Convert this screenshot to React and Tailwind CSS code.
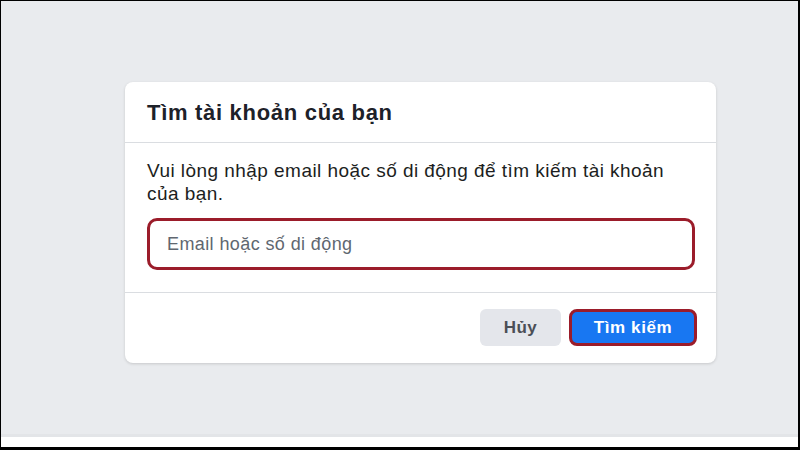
import React from 'react';

const App = () => {
  return (
    <div className="w-[800px] h-[450px] border-l border-t border-r-2 border-b-[3px] border-black bg-[#e9ebee] flex flex-col font-['Liberation_Sans',Arial,sans-serif] overflow-hidden">
      <div className="flex-1 pt-[81px] pl-[124px]">
        <div className="w-[591px] bg-white rounded-lg shadow-[0_1px_3px_rgba(0,0,0,0.15)]">
          <div className="h-[61px] flex items-center px-[22px] border-b border-[#dadde1]">
            <h2 className="text-[22px] tracking-[0.7px] font-bold text-[#1d2129]">Tìm tài khoản của bạn</h2>
          </div>
          <div className="pt-[16px] pb-[22px] px-[22px] border-b border-[#dadde1]">
            <p className="text-[19px] tracking-[0.45px] leading-[23px] text-[#1c1e21]">
              Vui lòng nhập email hoặc số di động để tìm kiếm tài khoản của bạn.
            </p>
            <div className="mt-[13px] h-[52px] rounded-[10px] border-[3px] border-[#9b1c2a] flex items-center px-[17px] mr-[-1px]">
              <span className="text-[18px] tracking-[0.4px] text-[#606770]">Email hoặc số di động</span>
            </div>
          </div>
          <div className="flex justify-end gap-[8px] pt-[16px] pb-[17px] pr-[19px]">
            <button className="w-[81px] h-[37px] rounded-md bg-[#e4e6eb] text-[#4b4f56] text-[17px] tracking-[0.5px] font-bold">Hủy</button>
            <button className="w-[128px] h-[37px] rounded-lg bg-[#1877f2] border-[3px] border-[#9b1c2a] text-white text-[17px] tracking-[0.6px] font-bold">Tìm kiếm</button>
          </div>
        </div>
      </div>
      <div className="h-[3px] bg-[#e3e5e8]" />
      <div className="h-[10px] bg-white" />
    </div>
  );
};

export default App;
